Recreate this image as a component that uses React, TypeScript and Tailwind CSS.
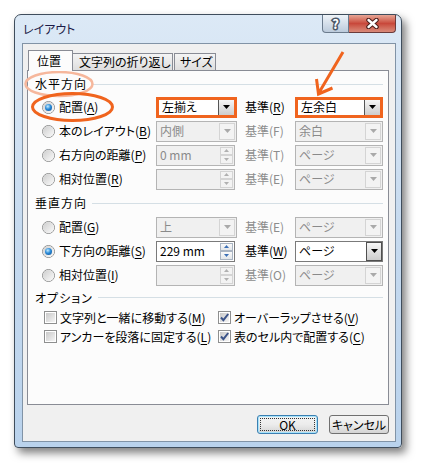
import type { ReactNode } from 'react';

const ORANGE = '#f0641e';

function Tri({ color, up = false, small = false }: { color: string; up?: boolean; small?: boolean }) {
    const w = small ? 5 : 7;
    const h = small ? 3 : 4;
    return (
        <svg width={w} height={h} viewBox={`0 0 ${w} ${h}`} className="block">
            <path d={up ? `M0 ${h}H${w}L${w / 2} 0Z` : `M0 0H${w}L${w / 2} ${h}Z`} fill={color} />
        </svg>
    );
}

function Key({ k }: { k: string }) {
    return <span className="underline decoration-1 underline-offset-[2px]">{k}</span>;
}

function Radio({ checked = false }: { checked?: boolean }) {
    return (
        <span className="flex h-[13px] w-[13px] shrink-0 items-center justify-center rounded-full border border-[#8e8f8f] bg-white">
            <span className="flex h-[11px] w-[11px] items-center justify-center rounded-full bg-linear-to-br from-[#cdcdcd] to-[#fbfbfb]">
                {checked && <span className="h-[7px] w-[7px] rounded-full bg-[radial-gradient(circle_at_40%_35%,#c4ecff_0%,#2a8ad8_45%,#0b4a8c_100%)]" />}
            </span>
        </span>
    );
}

function Check({ checked = false }: { checked?: boolean }) {
    return (
        <span className="flex h-[13px] w-[13px] shrink-0 items-center justify-center border border-[#8e8f8f] bg-white">
            <span className="relative flex h-[9px] w-[9px] items-center justify-center bg-linear-to-br from-[#c9c9c9] to-[#f5f5f5]">
                {checked && (
                    <svg width="11" height="11" viewBox="0 0 11 11" className="absolute -top-px -left-px">
                        <path d="M2 5.5L4.4 8.2L9.2 2" fill="none" stroke="#3b5388" strokeWidth="2" />
                    </svg>
                )}
            </span>
        </span>
    );
}

// combo box; "marked" = the orange frame drawn over it in the screenshot
function Combo({ value, width, disabled = false, marked = false }: { value: string; width: string; disabled?: boolean; marked?: boolean }) {
    const frame = marked
        ? 'border-[3px] border-[#f0641e] bg-white text-black'
        : disabled
          ? 'border border-[#b4b4b4] bg-[#f0f0f0] text-[#8a8a8a]'
          : 'border border-[#7a7a7a] bg-white text-black';
    const button = disabled
        ? 'm-px border border-[#d4d4d4] bg-[#f3f3f3]'
        : marked
          ? 'border-l border-[#555] bg-linear-to-b from-[#f6f6f6] to-[#cdcdcd]'
          : 'border border-[#4f4f4f] bg-linear-to-b from-[#f6f6f6] to-[#cdcdcd]';
    return (
        <div className={`flex h-[21px] shrink-0 ${frame} ${width}`}>
            <span className="flex flex-1 items-center overflow-hidden pl-[3px] whitespace-nowrap">{value}</span>
            <span className={`flex w-[16px] items-center justify-center ${button}`}>
                <Tri color={disabled ? '#a9a9a9' : '#000'} />
            </span>
        </div>
    );
}

function Spin({ value, disabled = false }: { value: string; disabled?: boolean }) {
    const half = `flex flex-1 items-center justify-center border ${disabled ? 'border-[#d4d4d4] bg-[#f3f3f3]' : 'border-[#a9b4c2] bg-linear-to-b from-[#fafafa] to-[#e2e6ea]'}`;
    const color = disabled ? '#b0b0b0' : '#3b6fb6';
    return (
        <div
            className={`mr-[2px] flex h-[21px] w-[79px] shrink-0 border ${disabled ? 'border-[#b4b4b4] bg-[#f0f0f0] text-[#8a8a8a]' : 'border-[#7a7a7a] bg-white text-black'}`}
        >
            <span className="flex flex-1 items-center pl-[3px] whitespace-nowrap">{value}</span>
            <span className="m-px flex w-[13px] flex-col">
                <span className={half}>
                    <Tri color={color} up small />
                </span>
                <span className={half}>
                    <Tri color={color} small />
                </span>
            </span>
        </div>
    );
}

function Row({
    checked = false,
    label,
    control,
    baseLabel,
    base,
    baseDim = false,
}: {
    checked?: boolean;
    label: ReactNode;
    control: ReactNode;
    baseLabel: ReactNode;
    base: ReactNode;
    baseDim?: boolean;
}) {
    return (
        <div className="flex h-[24px] items-center pl-[14px]">
            <Radio checked={checked} />
            <span className="ml-[4px] w-[97px] shrink-0 whitespace-nowrap">{label}</span>
            {control}
            <span className={`ml-[8px] w-[50px] shrink-0 whitespace-nowrap ${baseDim ? 'text-[#8d8d8d]' : ''}`}>{baseLabel}</span>
            {base}
        </div>
    );
}

function Header({ children, height }: { children: ReactNode; height: string }) {
    return (
        <div className={`flex items-center pr-[5px] pl-[7px] ${height}`}>
            <span className="tracking-[1px] whitespace-nowrap">{children}</span>
            <span className="ml-[5px] h-px flex-1 bg-[#d5dfe5]" />
        </div>
    );
}

export default function App() {
    return (
        <div className="relative h-[468px] w-[422px] overflow-hidden bg-white pt-[14px] pl-[14px] font-['Noto_Sans_CJK_JP','Noto_Sans',sans-serif] text-[12px] leading-[16px] text-black [font-feature-settings:'palt']">
            <div className="flex h-[434px] w-[388px] flex-col rounded-t-[7px] rounded-b-[4px] border border-[#3f4d5c] bg-linear-to-b from-[#dce9f6] via-[#c6daef] to-[#b9d2ec] shadow-[4px_5px_8px_rgba(0,0,0,0.5)]">
                {/* title bar */}
                <div className="flex h-[28px] shrink-0 items-start">
                    <span className="mt-[6px] pl-[8px] text-[#1c1c48]">レイアウト</span>
                    <div className="mr-[5px] ml-auto flex">
                        <div className="flex h-[18px] w-[27px] items-center justify-center rounded-bl-[4px] border border-t-0 border-[#6b7b8d] bg-linear-to-b from-[#eef3f8] to-[#bccbdc]">
                            <span className="text-[13px] leading-none font-bold text-white [-webkit-text-stroke:3px_#4c5868] [paint-order:stroke]">?</span>
                        </div>
                        <div className="flex h-[18px] w-[47px] items-center justify-center rounded-br-[4px] border border-t-0 border-l-0 border-[#6b3b3b] bg-linear-to-b from-[#e6a595] via-[#c8483b] to-[#d98a7a]">
                            <svg width="13" height="11" viewBox="0 0 13 11">
                                <path d="M2.5 2L10.5 9M10.5 2L2.5 9" stroke="#4a1e1a" strokeWidth="4.5" strokeLinecap="round" />
                                <path d="M2.5 2L10.5 9M10.5 2L2.5 9" stroke="#fff" strokeWidth="2.4" strokeLinecap="round" />
                            </svg>
                        </div>
                    </div>
                </div>

                {/* client area */}
                <div className="mr-[5px] ml-[7px] flex h-[399px] shrink-0 flex-col border border-[#8193a6] bg-[#f0f0f0] pt-[6px] pl-[4px]">
                    <div className="flex h-[20px] items-end pl-px">
                        <div className="relative z-10 -mb-px h-[21px] w-[45px] border border-b-0 border-[#898c95] bg-[#fcfcfc] pt-[2px] pl-[8px]">位置</div>
                        <div className="flex h-[17px] w-[100px] items-center border border-b-0 border-l-0 border-[#898c95] bg-linear-to-b from-[#f4f4f4] to-[#dedede] pl-[6px] whitespace-nowrap">
                            文字列の折り返し
                        </div>
                        <div className="ml-px flex h-[17px] w-[42px] items-center border border-b-0 border-[#898c95] bg-linear-to-b from-[#f4f4f4] to-[#dedede] pl-[5px]">
                            サイズ
                        </div>
                    </div>

                    <div className="h-[335px] w-[362px] border border-[#898c95] bg-[#fcfcfc] pt-[2px]">
                        <Header height="h-[22px]">水平方向</Header>
                        <Row
                            checked
                            label={
                                <>
                                    配置(<Key k="A" />)
                                </>
                            }
                            control={<Combo value="左揃え" width="w-[81px]" marked />}
                            baseLabel={
                                <>
                                    基準(<Key k="R" />)
                                </>
                            }
                            base={<Combo value="左余白" width="w-[88px]" marked />}
                        />
                        <Row
                            label={
                                <>
                                    本のレイアウト(<Key k="B" />)
                                </>
                            }
                            control={<Combo value="内側" width="w-[81px]" disabled />}
                            baseLabel="基準(F)"
                            baseDim
                            base={<Combo value="余白" width="w-[88px]" disabled />}
                        />
                        <Row
                            label={
                                <>
                                    右方向の距離(<Key k="P" />)
                                </>
                            }
                            control={<Spin value="0 mm" disabled />}
                            baseLabel="基準(T)"
                            baseDim
                            base={<Combo value="ページ" width="w-[88px]" disabled />}
                        />
                        <Row
                            label={
                                <>
                                    相対位置(<Key k="R" />)
                                </>
                            }
                            control={<Spin value="" disabled />}
                            baseLabel="基準(E)"
                            baseDim
                            base={<Combo value="ページ" width="w-[88px]" disabled />}
                        />

                        <Header height="h-[24px]">垂直方向</Header>
                        <Row
                            label={
                                <>
                                    配置(<Key k="G" />)
                                </>
                            }
                            control={<Combo value="上" width="w-[81px]" disabled />}
                            baseLabel="基準(E)"
                            baseDim
                            base={<Combo value="ページ" width="w-[88px]" disabled />}
                        />
                        <Row
                            checked
                            label={
                                <>
                                    下方向の距離(<Key k="S" />)
                                </>
                            }
                            control={<Spin value="229 mm" />}
                            baseLabel={
                                <>
                                    基準(<Key k="W" />)
                                </>
                            }
                            base={<Combo value="ページ" width="w-[88px]" />}
                        />
                        <Row
                            label={
                                <>
                                    相対位置(<Key k="I" />)
                                </>
                            }
                            control={<Spin value="" disabled />}
                            baseLabel="基準(O)"
                            baseDim
                            base={<Combo value="ページ" width="w-[88px]" disabled />}
                        />

                        <Header height="h-[21px]">オプション</Header>
                        <div className="grid h-[19px] grid-cols-[174px_1fr] items-center pl-[16px]">
                            <div className="flex items-center gap-[3px] whitespace-nowrap">
                                <Check />
                                <span>
                                    文字列と一緒に移動する(<Key k="M" />)
                                </span>
                            </div>
                            <div className="flex items-center gap-[3px] whitespace-nowrap">
                                <Check checked />
                                <span>
                                    オーバーラップさせる(<Key k="V" />)
                                </span>
                            </div>
                        </div>
                        <div className="grid h-[19px] grid-cols-[174px_1fr] items-center pl-[16px]">
                            <div className="flex items-center gap-[3px] whitespace-nowrap">
                                <Check />
                                <span>
                                    アンカーを段落に固定する(<Key k="L" />)
                                </span>
                            </div>
                            <div className="flex items-center gap-[3px] whitespace-nowrap">
                                <Check checked />
                                <span>
                                    表のセル内で配置する(<Key k="C" />)
                                </span>
                            </div>
                        </div>
                    </div>

                    <div className="mt-[10px] flex w-[362px] justify-end gap-[11px]">
                        <button className="h-[19px] w-[61px] rounded-[3px] border border-[#3c7fb1] bg-linear-to-b from-[#f4f4f4] via-[#ececec] to-[#d4d4d4] p-[2px] shadow-[inset_0_0_0_1px_#a6e3fb]">
                            <span className="flex h-full items-center justify-center border border-dotted border-[#333] leading-none">OK</span>
                        </button>
                        <button className="flex h-[19px] w-[60px] items-center justify-center rounded-[3px] border border-[#707070] bg-linear-to-b from-[#f4f4f4] via-[#ececec] to-[#d4d4d4] leading-none">
                            キャンセル
                        </button>
                    </div>
                </div>
            </div>

            {/* orange annotations drawn over the screenshot */}
            <svg className="pointer-events-none absolute top-0 left-0" width="422" height="468" viewBox="0 0 422 468">
                <ellipse cx="59" cy="84" rx="33.5" ry="12" fill="none" stroke="#f6b79c" strokeWidth="2.5" />
                <ellipse cx="72.5" cy="107" rx="40" ry="13.5" fill="none" stroke={ORANGE} strokeWidth="3" />
                <path d="M343 52L318.5 93.5M316.5 79L318.5 94L332.5 88" fill="none" stroke={ORANGE} strokeWidth="3" />
            </svg>
        </div>
    );
}
